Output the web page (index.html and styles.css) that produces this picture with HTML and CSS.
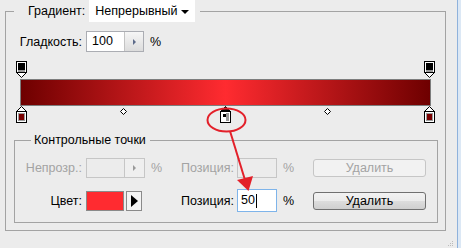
FILE: index.html
```html
<!DOCTYPE html>
<html lang="ru">
<head>
    <meta charset="UTF-8">
    <title>Редактор градиентов</title>
    <link rel="stylesheet" href="styles.css">
</head>
<body>
    <div class="window">
        <fieldset class="group outer">
            <legend class="outer-title">
                <span>Градиент:</span>
                <div class="select">
                    <span>Непрерывный</span>
                    <span class="select-arrow"></span>
                </div>
            </legend>

            <div class="smooth-row">
                <label class="smooth-label">Гладкость:</label>
                <div class="spin">
                    <span class="spin-value">100</span>
                    <span class="spin-btn"><i class="tri"></i></span>
                </div>
                <span class="unit">%</span>
            </div>

            <!-- Gradient bar with its stops -->
            <div class="slider">
                <div class="stops stops-top">
                    <svg class="stop at-0" width="11" height="17" viewBox="0 0 11 17">
                        <rect x="0.5" y="0.5" width="10" height="11" fill="#fff" stroke="#000"/>
                        <rect x="2" y="2" width="7" height="7" fill="#000"/>
                        <rect x="2" y="9" width="7" height="2" fill="#9a9a9a"/>
                        <polygon points="0.5,11.5 10.5,11.5 5.5,16.5" fill="#fff" stroke="#000"/>
                    </svg>
                    <svg class="stop at-100" width="11" height="17" viewBox="0 0 11 17">
                        <rect x="0.5" y="0.5" width="10" height="11" fill="#fff" stroke="#000"/>
                        <rect x="2" y="2" width="7" height="7" fill="#000"/>
                        <rect x="2" y="9" width="7" height="2" fill="#9a9a9a"/>
                        <polygon points="0.5,11.5 10.5,11.5 5.5,16.5" fill="#fff" stroke="#000"/>
                    </svg>
                </div>
                <div class="bar"></div>
                <div class="stops stops-bottom">
                    <svg class="stop at-0" width="11" height="17" viewBox="0 0 11 17">
                        <polygon points="0.5,5.5 5.5,0.5 10.5,5.5" fill="#fff" stroke="#000"/>
                        <rect x="0.5" y="5.5" width="10" height="11" fill="#fff" stroke="#000"/>
                        <rect x="2" y="7" width="7" height="8" fill="#9a9a9a"/>
                        <rect x="3" y="8" width="5" height="6" fill="#7a0000"/>
                    </svg>
                    <svg class="mid at-25" width="7" height="7" viewBox="0 0 7 7">
                        <polygon points="3.5,0.5 6.5,3.5 3.5,6.5 0.5,3.5" fill="#fff" stroke="#000"/>
                    </svg>
                    <svg class="stop at-50" width="11" height="17" viewBox="0 0 11 17">
                        <polygon points="0.5,5.5 5.5,0.5 10.5,5.5" fill="#000" stroke="#000"/>
                        <rect x="0.5" y="5.5" width="10" height="11" fill="#fff" stroke="#000"/>
                        <rect x="2" y="7" width="7" height="8" fill="#9a9a9a"/>
                        <rect x="2" y="7" width="4" height="8" fill="#fff"/>
                        <rect x="3" y="8" width="3" height="3" fill="#000"/>
                    </svg>
                    <svg class="mid at-75" width="7" height="7" viewBox="0 0 7 7">
                        <polygon points="3.5,0.5 6.5,3.5 3.5,6.5 0.5,3.5" fill="#fff" stroke="#000"/>
                    </svg>
                    <svg class="stop at-100" width="11" height="17" viewBox="0 0 11 17">
                        <polygon points="0.5,5.5 5.5,0.5 10.5,5.5" fill="#fff" stroke="#000"/>
                        <rect x="0.5" y="5.5" width="10" height="11" fill="#fff" stroke="#000"/>
                        <rect x="2" y="7" width="7" height="8" fill="#9a9a9a"/>
                        <rect x="3" y="8" width="5" height="6" fill="#7a0000"/>
                    </svg>
                </div>
            </div>

            <fieldset class="group inner">
                <legend class="inner-title">Контрольные точки</legend>
                <div class="stop-grid">
                    <span class="label disabled">Непрозр.:</span>
                    <div class="spin spin-disabled">
                        <span class="spin-value"></span>
                        <span class="spin-btn"><i class="tri"></i></span>
                    </div>
                    <span class="unit disabled">%</span>
                    <span class="pos-label disabled">Позиция:</span>
                    <div class="box box-disabled"></div>
                    <span class="unit disabled">%</span>
                    <button class="btn" disabled>Удалить</button>

                    <span class="label">Цвет:</span>
                    <div class="color-pick">
                        <span class="swatch"></span>
                        <span class="swatch-btn"><i class="tri-big"></i></span>
                    </div>
                    <span></span>
                    <span class="pos-label">Позиция:</span>
                    <div class="box box-focus">50<i class="caret"></i></div>
                    <span class="unit">%</span>
                    <button class="btn">Удалить</button>
                </div>
            </fieldset>
        </fieldset>

        <!-- red annotation drawn over the dialog -->
        <svg class="annotation" width="461" height="248" viewBox="0 0 461 248">
            <ellipse cx="226.5" cy="120" rx="19" ry="11.5" fill="none" stroke="#e3202a" stroke-width="2"/>
            <line x1="230" y1="131" x2="245" y2="180" stroke="#e3202a" stroke-width="2"/>
            <polygon points="237,180 253,176 248.5,191" fill="#e3202a"/>
        </svg>
        <svg class="grip" width="8" height="8" viewBox="0 0 8 8">
            <rect x="6" y="1" width="1" height="1" fill="#bbb"/>
            <rect x="4" y="3" width="1" height="1" fill="#bbb"/>
            <rect x="6" y="3" width="1" height="1" fill="#bbb"/>
            <rect x="2" y="5" width="1" height="1" fill="#bbb"/>
            <rect x="4" y="5" width="1" height="1" fill="#bbb"/>
            <rect x="6" y="5" width="1" height="1" fill="#bbb"/>
        </svg>
    </div>
</body>
</html>
```

FILE: styles.css
```css
body {
    margin: 0;
    background: #dce8f5;
    font-family: "Liberation Sans", Arial, sans-serif;
    font-size: 12.5px;
    color: #000;
}

.window {
    position: relative;
    width: 458px;
    height: 248px;
    background: #ececec;
    border-right: 1px solid #8fb2dc;
    box-sizing: border-box;
    overflow: hidden;
}

/* Group boxes */
.group {
    border: 1px solid #a3a3a3;
    margin: 0;
    min-inline-size: 0;
    box-sizing: border-box;
}

.outer {
    margin-left: 5px;
    width: 441px;
    height: 231px;
    padding: 0 8px 0 8px;
}

.outer-title {
    display: flex;
    align-items: center;
    gap: 4px;
    height: 22px;
    padding: 0 5px 0 14px;
    margin: 0;
}

.select {
    display: flex;
    align-items: center;
    justify-content: space-between;
    width: 106px;
    height: 22px;
    padding: 0 6px 0 6px;
    box-sizing: border-box;
    background: #fff;
}

.select-arrow {
    flex: none;
    width: 0;
    height: 0;
    border-left: 4px solid transparent;
    border-right: 4px solid transparent;
    border-top: 4px solid #000;
    margin-top: 1px;
}

/* Smoothness row */
.smooth-row {
    display: flex;
    align-items: center;
    margin-top: 9px;
    height: 21px;
}

.smooth-label {
    width: 72px;
    padding-right: 4px;
    box-sizing: border-box;
    text-align: right;
}

.spin {
    display: flex;
    width: 58px;
    height: 21px;
    box-sizing: border-box;
    border: 1px solid #abadb3;
    background: #fff;
}

.spin-value {
    flex: 1;
    padding-left: 5px;
    line-height: 19px;
}

.spin-btn {
    display: flex;
    align-items: center;
    justify-content: center;
    width: 18px;
    border-left: 1px solid #c3c3c3;
    background: linear-gradient(#f6f6f6, #dcdcdc);
}

.tri {
    width: 0;
    height: 0;
    border-top: 3px solid transparent;
    border-bottom: 3px solid transparent;
    border-left: 3px solid #5d6b8a;
}

.unit {
    width: 36px;
    padding-left: 6px;
    box-sizing: border-box;
}

/* Gradient slider */
.slider {
    margin: 9px 0 0 2px;
    width: 419px;
}

.stops {
    position: relative;
}

.stops-top {
    height: 18px;
}

.stops-bottom {
    height: 18px;
}

.stops svg {
    position: absolute;
    top: 0;
    display: block;
}

.stop.at-0 { left: 0; }
.stop.at-50 { left: 204px; }
.stop.at-100 { left: 408px; }

.mid {
    top: 2px !important;
}

.mid.at-25 { left: 104px; }
.mid.at-75 { left: 308px; }

.bar {
    height: 27px;
    margin: 0 4px;
    box-sizing: border-box;
    border: 1px solid #7d7d7d;
    background: linear-gradient(to right, #6e0000, #ff2b30 50%, #6e0000);
}

/* Stop properties */
.inner {
    margin-top: 9px;
    width: 424px;
    height: 90px;
    padding: 0;
}

.inner-title {
    margin-left: 16px;
    padding: 0 4px 0 3px;
    line-height: 14px;
}

.stop-grid {
    display: grid;
    grid-template-columns: 71px 59px 36px 56px 40px 36px 113px;
    grid-template-rows: 21px 23px;
    row-gap: 11px;
    align-items: center;
    padding-top: 10px;
}

.label {
    text-align: right;
    padding-right: 4px;
}

.disabled {
    color: #a3a3a3;
}

.spin-disabled {
    width: 59px;
    height: 20px;
    border-color: #c6c6c6;
    background: #ececec;
}

.spin-disabled .spin-btn {
    width: 19px;
    border-left-color: #c6c6c6;
    background: #efefef;
}

.spin-disabled .tri {
    border-left-color: #9a9a9a;
}

.box {
    height: 20px;
    box-sizing: border-box;
    border: 1px solid #c6c6c6;
}

.box-focus {
    height: 23px;
    border-color: #7eb4ea;
    background: #fff;
    padding-left: 3px;
    line-height: 21px;
    display: flex;
    align-items: center;
}

.caret {
    display: inline-block;
    width: 1px;
    height: 14px;
    margin-left: 1px;
    background: #000;
}

.btn {
    height: 18px;
    padding: 0;
    font-family: inherit;
    font-size: 12.5px;
    color: #000;
    border: 1px solid #707070;
    border-radius: 3px;
    background: linear-gradient(#f2f2f2, #ebebeb 50%, #dddddd 50%, #cfcfcf);
}

.btn:disabled {
    color: #a3a3a3;
    border-color: #c6c6c6;
    background: #f2f2f2;
}

.color-pick {
    display: flex;
    gap: 2px;
    height: 20px;
}

.swatch {
    width: 38px;
    box-sizing: border-box;
    border: 1px solid #8a8a8a;
    background: #ff2b30;
}

.swatch-btn {
    display: flex;
    align-items: center;
    justify-content: center;
    width: 16px;
    box-sizing: border-box;
    border: 1px solid #8a8a8a;
    background: #f4f4f4;
}

.tri-big {
    width: 0;
    height: 0;
    border-top: 6px solid transparent;
    border-bottom: 6px solid transparent;
    border-left: 7px solid #000;
    margin-left: 1px;
}

/* Overlays */
.annotation {
    position: absolute;
    top: 0;
    left: 0;
    pointer-events: none;
}

.grip {
    position: absolute;
    right: 3px;
    bottom: 0;
}
```
